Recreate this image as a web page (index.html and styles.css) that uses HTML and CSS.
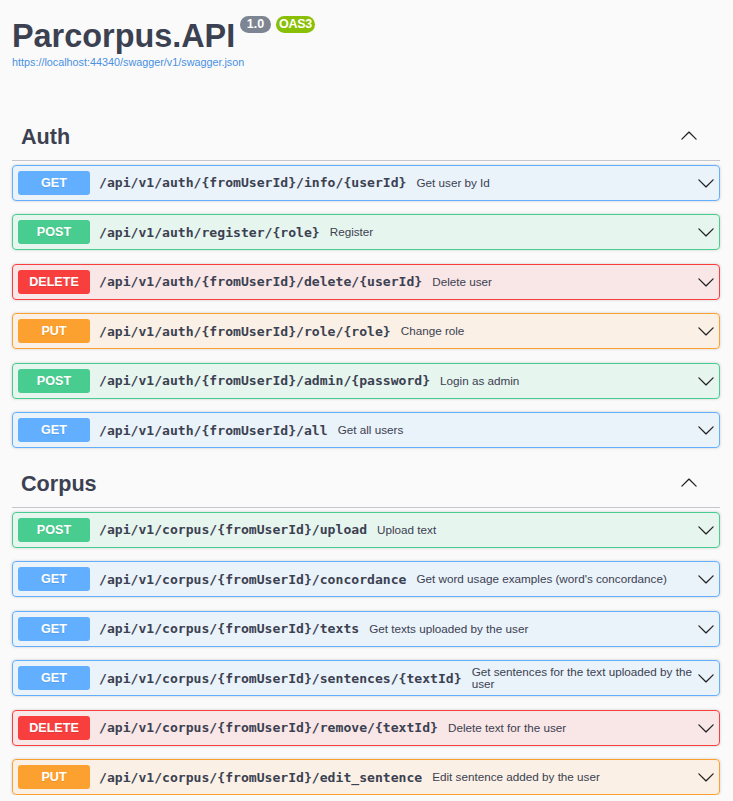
FILE: index.html
```html
<!DOCTYPE html>
<html lang="en">
<head>
<meta charset="utf-8">
<title>Parcorpus.API</title>
<link rel="stylesheet" href="styles.css">
</head>
<body>
<div class="wrapper">
  <header class="info">
    <div class="title-row">
      <h1 class="title">Parcorpus.API</h1>
      <span class="badge badge-version">1.0</span>
      <span class="badge badge-oas">OAS3</span>
    </div>
    <a class="spec-link" href="#">https://localhost:44340/swagger/v1/swagger.json</a>
  </header>

  <section class="tag-section">
    <div class="tag-header">
      <h3 class="tag-name">Auth</h3>
      <svg class="arrow arrow-up" viewBox="0 0 20 20"><path d="M17.418 6.109c.272-.268.709-.268.979 0s.271.701 0 .969l-7.908 7.83c-.27.268-.707.268-.979 0l-7.908-7.83c-.27-.268-.27-.701 0-.969.271-.268.709-.268.979 0L10 13.25l7.418-7.141z"/></svg>
    </div>
    <div class="ops">
      <div class="op op-get"><span class="method">GET</span><span class="path">/api/v1/auth/{fromUserId}/info/{userId}</span><span class="desc">Get user by Id</span><svg class="arrow" viewBox="0 0 20 20"><path d="M17.418 6.109c.272-.268.709-.268.979 0s.271.701 0 .969l-7.908 7.83c-.27.268-.707.268-.979 0l-7.908-7.83c-.27-.268-.27-.701 0-.969.271-.268.709-.268.979 0L10 13.25l7.418-7.141z"/></svg></div>
      <div class="op op-post"><span class="method">POST</span><span class="path">/api/v1/auth/register/{role}</span><span class="desc">Register</span><svg class="arrow" viewBox="0 0 20 20"><path d="M17.418 6.109c.272-.268.709-.268.979 0s.271.701 0 .969l-7.908 7.83c-.27.268-.707.268-.979 0l-7.908-7.83c-.27-.268-.27-.701 0-.969.271-.268.709-.268.979 0L10 13.25l7.418-7.141z"/></svg></div>
      <div class="op op-delete"><span class="method">DELETE</span><span class="path">/api/v1/auth/{fromUserId}/delete/{userId}</span><span class="desc">Delete user</span><svg class="arrow" viewBox="0 0 20 20"><path d="M17.418 6.109c.272-.268.709-.268.979 0s.271.701 0 .969l-7.908 7.83c-.27.268-.707.268-.979 0l-7.908-7.83c-.27-.268-.27-.701 0-.969.271-.268.709-.268.979 0L10 13.25l7.418-7.141z"/></svg></div>
      <div class="op op-put"><span class="method">PUT</span><span class="path">/api/v1/auth/{fromUserId}/role/{role}</span><span class="desc">Change role</span><svg class="arrow" viewBox="0 0 20 20"><path d="M17.418 6.109c.272-.268.709-.268.979 0s.271.701 0 .969l-7.908 7.83c-.27.268-.707.268-.979 0l-7.908-7.83c-.27-.268-.27-.701 0-.969.271-.268.709-.268.979 0L10 13.25l7.418-7.141z"/></svg></div>
      <div class="op op-post"><span class="method">POST</span><span class="path">/api/v1/auth/{fromUserId}/admin/{password}</span><span class="desc">Login as admin</span><svg class="arrow" viewBox="0 0 20 20"><path d="M17.418 6.109c.272-.268.709-.268.979 0s.271.701 0 .969l-7.908 7.83c-.27.268-.707.268-.979 0l-7.908-7.83c-.27-.268-.27-.701 0-.969.271-.268.709-.268.979 0L10 13.25l7.418-7.141z"/></svg></div>
      <div class="op op-get"><span class="method">GET</span><span class="path">/api/v1/auth/{fromUserId}/all</span><span class="desc">Get all users</span><svg class="arrow" viewBox="0 0 20 20"><path d="M17.418 6.109c.272-.268.709-.268.979 0s.271.701 0 .969l-7.908 7.83c-.27.268-.707.268-.979 0l-7.908-7.83c-.27-.268-.27-.701 0-.969.271-.268.709-.268.979 0L10 13.25l7.418-7.141z"/></svg></div>
    </div>
  </section>

  <section class="tag-section">
    <div class="tag-header">
      <h3 class="tag-name">Corpus</h3>
      <svg class="arrow arrow-up" viewBox="0 0 20 20"><path d="M17.418 6.109c.272-.268.709-.268.979 0s.271.701 0 .969l-7.908 7.83c-.27.268-.707.268-.979 0l-7.908-7.83c-.27-.268-.27-.701 0-.969.271-.268.709-.268.979 0L10 13.25l7.418-7.141z"/></svg>
    </div>
    <div class="ops">
      <div class="op op-post"><span class="method">POST</span><span class="path">/api/v1/corpus/{fromUserId}/upload</span><span class="desc">Upload text</span><svg class="arrow" viewBox="0 0 20 20"><path d="M17.418 6.109c.272-.268.709-.268.979 0s.271.701 0 .969l-7.908 7.83c-.27.268-.707.268-.979 0l-7.908-7.83c-.27-.268-.27-.701 0-.969.271-.268.709-.268.979 0L10 13.25l7.418-7.141z"/></svg></div>
      <div class="op op-get"><span class="method">GET</span><span class="path">/api/v1/corpus/{fromUserId}/concordance</span><span class="desc">Get word usage examples (word's concordance)</span><svg class="arrow" viewBox="0 0 20 20"><path d="M17.418 6.109c.272-.268.709-.268.979 0s.271.701 0 .969l-7.908 7.83c-.27.268-.707.268-.979 0l-7.908-7.83c-.27-.268-.27-.701 0-.969.271-.268.709-.268.979 0L10 13.25l7.418-7.141z"/></svg></div>
      <div class="op op-get"><span class="method">GET</span><span class="path">/api/v1/corpus/{fromUserId}/texts</span><span class="desc">Get texts uploaded by the user</span><svg class="arrow" viewBox="0 0 20 20"><path d="M17.418 6.109c.272-.268.709-.268.979 0s.271.701 0 .969l-7.908 7.83c-.27.268-.707.268-.979 0l-7.908-7.83c-.27-.268-.27-.701 0-.969.271-.268.709-.268.979 0L10 13.25l7.418-7.141z"/></svg></div>
      <div class="op op-get"><span class="method">GET</span><span class="path">/api/v1/corpus/{fromUserId}/sentences/{textId}</span><span class="desc">Get sentences for the text uploaded by the user</span><svg class="arrow" viewBox="0 0 20 20"><path d="M17.418 6.109c.272-.268.709-.268.979 0s.271.701 0 .969l-7.908 7.83c-.27.268-.707.268-.979 0l-7.908-7.83c-.27-.268-.27-.701 0-.969.271-.268.709-.268.979 0L10 13.25l7.418-7.141z"/></svg></div>
      <div class="op op-delete"><span class="method">DELETE</span><span class="path">/api/v1/corpus/{fromUserId}/remove/{textId}</span><span class="desc">Delete text for the user</span><svg class="arrow" viewBox="0 0 20 20"><path d="M17.418 6.109c.272-.268.709-.268.979 0s.271.701 0 .969l-7.908 7.83c-.27.268-.707.268-.979 0l-7.908-7.83c-.27-.268-.27-.701 0-.969.271-.268.709-.268.979 0L10 13.25l7.418-7.141z"/></svg></div>
      <div class="op op-put"><span class="method">PUT</span><span class="path">/api/v1/corpus/{fromUserId}/edit_sentence</span><span class="desc">Edit sentence added by the user</span><svg class="arrow" viewBox="0 0 20 20"><path d="M17.418 6.109c.272-.268.709-.268.979 0s.271.701 0 .969l-7.908 7.83c-.27.268-.707.268-.979 0l-7.908-7.83c-.27-.268-.27-.701 0-.969.271-.268.709-.268.979 0L10 13.25l7.418-7.141z"/></svg></div>
    </div>
  </section>
</div>
</body>
</html>
```

FILE: styles.css
```css
html, body {
  margin: 0;
  padding: 0;
  background: #fafafa;
}

body {
  font-family: "Liberation Sans", Arial, sans-serif;
  color: #3b4151;
}

.wrapper {
  padding: 16px 13px 0 12px;
}

/* ---------- info ---------- */
.title-row {
  display: flex;
  align-items: flex-start;
}

.title {
  margin: 1.5px 0 0 0;
  font-size: 32.4px;
  line-height: 36px;
  font-weight: 700;
  color: #3b4151;
}

.badge {
  margin-left: 5px;
  height: 17px;
  line-height: 17px;
  border-radius: 9px;
  color: #fff;
  font-size: 12.5px;
  font-weight: 700;
}

.badge-version {
  background: #7d8492;
  padding: 0 6.5px;
}

.badge-oas {
  background: #89bf04;
  padding: 0 3.5px;
  letter-spacing: -0.3px;
}

.spec-link {
  display: block;
  margin-top: 2px;
  font-size: 10.8px;
  line-height: 13px;
  color: #4990e2;
  text-decoration: none;
}

/* ---------- tag sections ---------- */
.tag-section {
  margin-top: 15.5px;
}

.info + .tag-section {
  margin-top: 48px;
}

.tag-header {
  display: flex;
  align-items: center;
  justify-content: space-between;
  padding: 7px 22px 11px 9px;
  border-bottom: 1px solid #c4c6cb;
}

.tag-name {
  margin: 0;
  font-size: 21.6px;
  line-height: 25px;
  font-weight: 700;
  color: #3b4151;
}

.arrow {
  width: 18px;
  height: 18px;
  flex-shrink: 0;
  fill: #222;
}

.arrow-up {
  transform: rotate(180deg);
}

.ops {
  margin-top: 4px;
  display: flex;
  flex-direction: column;
  gap: 13.5px;
}

/* ---------- operation rows ---------- */
.op {
  display: flex;
  align-items: center;
  padding: 5px 4px 5px 5px;
  border: 1px solid;
  border-radius: 4px;
  box-shadow: 0 0 3px rgba(0, 0, 0, 0.19);
}

.method {
  flex-shrink: 0;
  width: 72px;
  height: 24px;
  line-height: 24px;
  text-align: center;
  border-radius: 3px;
  color: #fff;
  font-size: 12.6px;
  font-weight: 700;
  text-shadow: 0 1px 0 rgba(0, 0, 0, 0.1);
}

.path {
  flex-shrink: 0;
  margin-left: 9px;
  font-family: "DejaVu Sans Mono", "Liberation Mono", monospace;
  font-size: 13.1px;
  font-weight: 700;
  color: #3b4151;
}

.desc {
  flex: 1;
  min-width: 0;
  margin-left: 10px;
  font-size: 11.7px;
  line-height: 12px;
  color: #3b4151;
}

.op-get {
  border-color: #61affe;
  background: rgba(97, 175, 254, 0.1);
}
.op-get .method { background: #61affe; }

.op-post {
  border-color: #49cc90;
  background: rgba(73, 204, 144, 0.1);
}
.op-post .method { background: #49cc90; }

.op-delete {
  border-color: #f93e3e;
  background: rgba(249, 62, 62, 0.1);
}
.op-delete .method { background: #f93e3e; }

.op-put {
  border-color: #fca130;
  background: rgba(252, 161, 48, 0.1);
}
.op-put .method { background: #fca130; }
```
